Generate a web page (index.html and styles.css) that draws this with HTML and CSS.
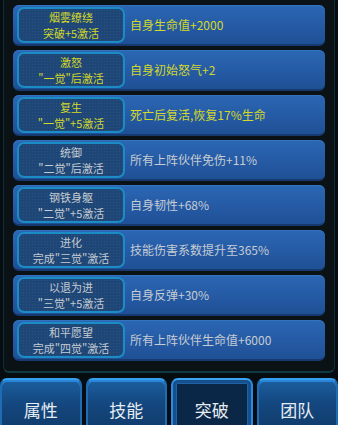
FILE: index.html
```html
<!DOCTYPE html>
<html lang="zh-CN">
<head>
    <meta charset="UTF-8">
    <meta name="viewport" content="width=device-width, initial-scale=1.0">
    <title>突破</title>
    <link rel="stylesheet" href="styles.css">
</head>
<body>
    <div class="panel">
        <div class="row gold">
            <div class="badge"><span>烟雾缭绕</span><span>突破+5激活</span></div>
            <div class="desc">自身生命值+2000</div>
        </div>
        <div class="row gold">
            <div class="badge"><span>激怒</span><span>"一觉"后激活</span></div>
            <div class="desc">自身初始怒气+2</div>
        </div>
        <div class="row gold">
            <div class="badge"><span>复生</span><span>"一觉"+5激活</span></div>
            <div class="desc">死亡后复活,恢复17%生命</div>
        </div>
        <div class="row">
            <div class="badge"><span>统御</span><span>"二觉"后激活</span></div>
            <div class="desc">所有上阵伙伴免伤+11%</div>
        </div>
        <div class="row">
            <div class="badge"><span>钢铁身躯</span><span>"二觉"+5激活</span></div>
            <div class="desc">自身韧性+68%</div>
        </div>
        <div class="row">
            <div class="badge"><span>进化</span><span>完成"三觉"激活</span></div>
            <div class="desc">技能伤害系数提升至365%</div>
        </div>
        <div class="row">
            <div class="badge"><span>以退为进</span><span>"三觉"+5激活</span></div>
            <div class="desc">自身反弹+30%</div>
        </div>
        <div class="row">
            <div class="badge"><span>和平愿望</span><span>完成"四觉"激活</span></div>
            <div class="desc">所有上阵伙伴生命值+6000</div>
        </div>
    </div>

    <div class="tabs">
        <div class="tab">属性</div>
        <div class="tab">技能</div>
        <div class="tab active">突破</div>
        <div class="tab">团队</div>
    </div>
</body>
</html>
```

FILE: styles.css
```css
html, body {
    margin: 0;
    height: 425px;
    overflow: hidden;
}

body {
    font-family: "Noto Sans CJK SC", "Noto Sans", sans-serif;
    background-color: #060c10;
}

.panel {
    margin: 0 3px;
    padding: 5px 9px 10px 9px;
    border-left: 1px solid #0d2e36;
    border-right: 1px solid #0d2e36;
    border-bottom: 2px solid #0f3a44;
    border-radius: 0 0 6px 6px;
    background-color: #0a1216;
}

.row {
    height: 41px;
    box-sizing: border-box;
    margin-bottom: 4px;
    padding: 0 4px;
    display: flex;
    align-items: center;
    border-radius: 6px;
    border-bottom: 2px solid #163a70;
    background: linear-gradient(#2b67b4, #255aa4 55%, #1f5095);
    box-shadow: inset 0 1px 0 #3272be;
    color: #c6ccd2;
}

.row:last-child {
    margin-bottom: 0;
}

.row.gold {
    color: #d4d82a;
}

.badge {
    width: 108px;
    height: 36px;
    box-sizing: border-box;
    margin-top: 1px;
    border: 2px solid #1b8cc6;
    border-radius: 7px;
    background-color: #1e4677;
    background-image: radial-gradient(rgba(255, 255, 255, 0.06) 1px, transparent 1px);
    background-size: 3px 3px;
    display: flex;
    flex-direction: column;
    align-items: center;
    justify-content: center;
    font-size: 11px;
    line-height: 16px;
}

.desc {
    margin-left: 5px;
    font-size: 12px;
}

.tabs {
    margin-top: 5px;
    display: grid;
    grid-template-columns: repeat(4, 1fr);
    gap: 4px;
}

.tab {
    height: 60px;
    box-sizing: border-box;
    padding-top: 20px;
    text-align: center;
    font-size: 17px;
    line-height: 20px;
    color: #e6ecf2;
    border: 2px solid #1e6cb4;
    border-top-color: #36a0f0;
    border-radius: 7px 7px 0 0;
    background: linear-gradient(#1c5fa0, #144880 40%, #0f3866);
    box-shadow: inset 0 2px 0 #2a86d8;
}

.tab.active {
    border-color: #2a8ae0;
    border-top-color: #3aa4f4;
    background: #0a2748;
    box-shadow: inset 0 0 0 3px #164f8c, inset 0 0 0 4px #1c63a8;
}
```
